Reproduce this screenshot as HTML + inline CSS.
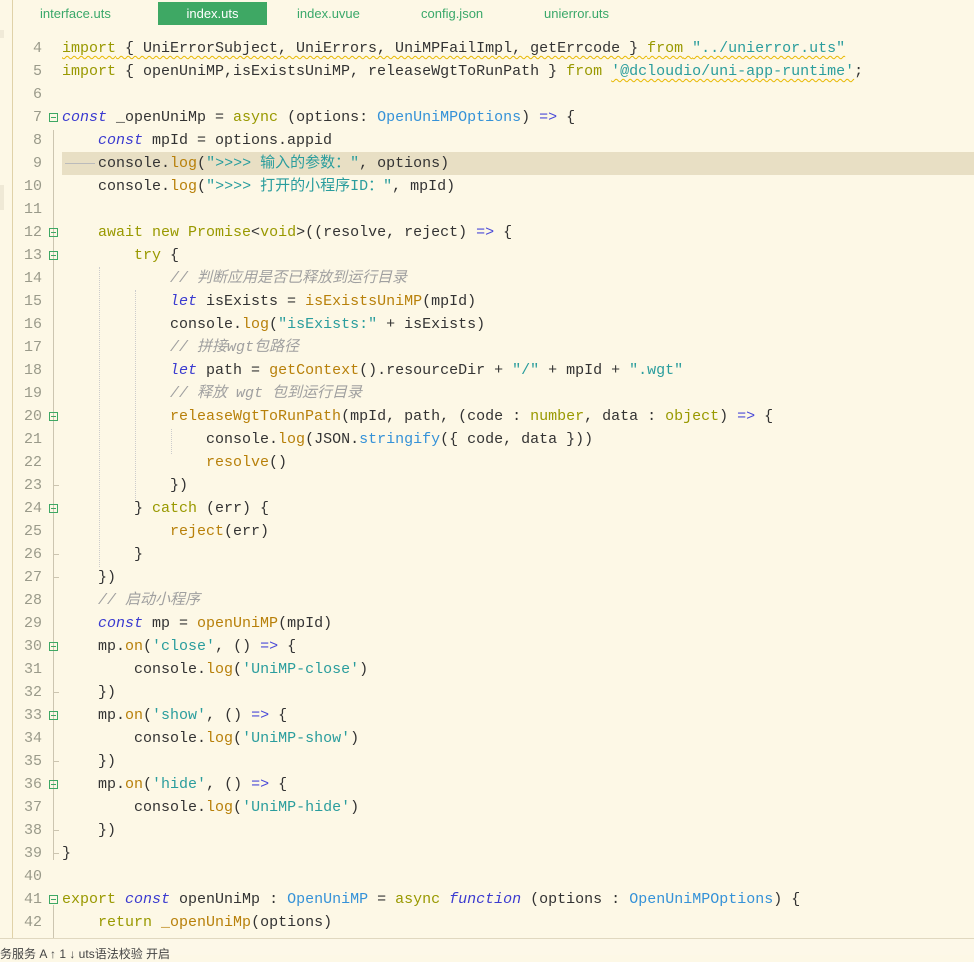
<!DOCTYPE html>
<html><head><meta charset="utf-8"><style>
body{margin:0;width:974px;height:954px;overflow:hidden;background:#fdf8e6;position:relative;font-family:"Liberation Mono","Noto Sans CJK SC",monospace;}
.tab{position:absolute;top:0;height:28px;font-family:"Liberation Sans","Noto Sans CJK SC",sans-serif;font-size:13px;line-height:28px;color:#3aa86a;}
.act{background:#3ea864;color:#fff;top:2px;height:23px;line-height:23px;text-align:center;}
.ln{position:absolute;left:14px;width:28px;text-align:right;font-size:15px;color:#9a9a8a;height:23px;line-height:23px;}
.cd{position:absolute;left:62px;font-size:15px;color:#333;white-space:pre;height:23px;line-height:23px;}
.k{color:#999900}.c{color:#3b3bd0;font-style:italic}.t{color:#3592d8}.s{color:#2a9d9d}.f{color:#b8800a}.m{color:#a0a0a0;font-style:italic}.o{color:#4a4ad8}
.w{text-decoration:underline wavy #e8b800;text-decoration-thickness:1px;text-underline-offset:3px}
.fold{position:absolute;left:49px;width:7px;height:7px;border:1px solid #3ea864;}
.fold:after{content:"";position:absolute;left:1px;right:1px;top:3px;height:1px;background:#3ea864}
.vl{position:absolute;left:53px;width:1px;background:#ccc5b0}
.tk{position:absolute;left:53px;width:6px;height:1px;background:#ccc5b0}
</style></head><body>
<div style="position:absolute;left:12px;top:0;width:1px;height:940px;background:#e0d2a8"></div>
<div style="position:absolute;left:0;top:30px;width:4px;height:8px;background:#f0ead8"></div>
<div style="position:absolute;left:0;top:185px;width:4px;height:25px;background:#efe9d6"></div>
<div class="tab" style="left:40px">interface.uts</div>
<div class="tab act" style="left:158px;width:109px">index.uts</div>
<div class="tab" style="left:297px">index.uvue</div>
<div class="tab" style="left:421px">config.json</div>
<div class="tab" style="left:544px">unierror.uts</div>
<div style="position:absolute;left:62px;top:152px;width:912px;height:23px;background:#e8dfc4"></div>
<div style="position:absolute;left:65px;top:163px;width:30px;height:1px;background:#bbb"></div>

<div class="vl" style="top:130px;height:730px"></div>
<div class="tk" style="top:485px"></div><div class="tk" style="top:554px"></div><div class="tk" style="top:577px"></div><div class="tk" style="top:692px"></div><div class="tk" style="top:761px"></div><div class="tk" style="top:830px"></div><div class="tk" style="top:853px"></div>
<div class="vl" style="top:905px;height:33px"></div>
<div style="position:absolute;left:99px;top:267px;height:300px;border-left:1px dotted #ccc"></div>
<div style="position:absolute;left:135px;top:290px;height:210px;border-left:1px dotted #ccc"></div>
<div style="position:absolute;left:171px;top:429px;height:25px;border-left:1px dotted #ccc"></div>

<div class="fold" style="top:113px"></div><div class="fold" style="top:228px"></div><div class="fold" style="top:251px"></div><div class="fold" style="top:412px"></div><div class="fold" style="top:504px"></div><div class="fold" style="top:642px"></div><div class="fold" style="top:711px"></div><div class="fold" style="top:780px"></div><div class="fold" style="top:895px"></div>

<div class="ln" style="top:37px">4</div><div class="cd" style="top:37px"><span class="w"><span class="k">import</span> { UniErrorSubject, UniErrors, UniMPFailImpl, getErrcode } <span class="k">from</span> <span class="s">"../unierror.uts"</span></span></div>
<div class="ln" style="top:60px">5</div><div class="cd" style="top:60px"><span class="k">import</span> { openUniMP,isExistsUniMP, releaseWgtToRunPath } <span class="k">from</span> <span class="s w">'@dcloudio/uni-app-runtime'</span>;</div>
<div class="ln" style="top:83px">6</div>
<div class="ln" style="top:106px">7</div><div class="cd" style="top:106px"><span class="c">const</span> _openUniMp = <span class="k">async</span> (options: <span class="t">OpenUniMPOptions</span>) <span class="o">=&gt;</span> {</div>
<div class="ln" style="top:129px">8</div><div class="cd" style="top:129px">    <span class="c">const</span> mpId = options.appid</div>
<div class="ln" style="top:152px">9</div><div class="cd" style="top:152px">    console.<span class="f">log</span>(<span class="s">"&gt;&gt;&gt;&gt; 输入的参数："</span>, options)</div>
<div class="ln" style="top:175px">10</div><div class="cd" style="top:175px">    console.<span class="f">log</span>(<span class="s">"&gt;&gt;&gt;&gt; 打开的小程序ID："</span>, mpId)</div>
<div class="ln" style="top:198px">11</div>
<div class="ln" style="top:221px">12</div><div class="cd" style="top:221px">    <span class="k">await new Promise</span>&lt;<span class="k">void</span>&gt;((resolve, reject) <span class="o">=&gt;</span> {</div>
<div class="ln" style="top:244px">13</div><div class="cd" style="top:244px">        <span class="k">try</span> {</div>
<div class="ln" style="top:267px">14</div><div class="cd" style="top:267px">            <span class="m">// 判断应用是否已释放到运行目录</span></div>
<div class="ln" style="top:290px">15</div><div class="cd" style="top:290px">            <span class="c">let</span> isExists = <span class="f">isExistsUniMP</span>(mpId)</div>
<div class="ln" style="top:313px">16</div><div class="cd" style="top:313px">            console.<span class="f">log</span>(<span class="s">"isExists:"</span> + isExists)</div>
<div class="ln" style="top:336px">17</div><div class="cd" style="top:336px">            <span class="m">// 拼接wgt包路径</span></div>
<div class="ln" style="top:359px">18</div><div class="cd" style="top:359px">            <span class="c">let</span> path = <span class="f">getContext</span>().resourceDir + <span class="s">"/"</span> + mpId + <span class="s">".wgt"</span></div>
<div class="ln" style="top:382px">19</div><div class="cd" style="top:382px">            <span class="m">// 释放 wgt 包到运行目录</span></div>
<div class="ln" style="top:405px">20</div><div class="cd" style="top:405px">            <span class="f">releaseWgtToRunPath</span>(mpId, path, (code : <span class="k">number</span>, data : <span class="k">object</span>) <span class="o">=&gt;</span> {</div>
<div class="ln" style="top:428px">21</div><div class="cd" style="top:428px">                console.<span class="f">log</span>(JSON.<span class="t">stringify</span>({ code, data }))</div>
<div class="ln" style="top:451px">22</div><div class="cd" style="top:451px">                <span class="f">resolve</span>()</div>
<div class="ln" style="top:474px">23</div><div class="cd" style="top:474px">            })</div>
<div class="ln" style="top:497px">24</div><div class="cd" style="top:497px">        } <span class="k">catch</span> (err) {</div>
<div class="ln" style="top:520px">25</div><div class="cd" style="top:520px">            <span class="f">reject</span>(err)</div>
<div class="ln" style="top:543px">26</div><div class="cd" style="top:543px">        }</div>
<div class="ln" style="top:566px">27</div><div class="cd" style="top:566px">    })</div>
<div class="ln" style="top:589px">28</div><div class="cd" style="top:589px">    <span class="m">// 启动小程序</span></div>
<div class="ln" style="top:612px">29</div><div class="cd" style="top:612px">    <span class="c">const</span> mp = <span class="f">openUniMP</span>(mpId)</div>
<div class="ln" style="top:635px">30</div><div class="cd" style="top:635px">    mp.<span class="f">on</span>(<span class="s">'close'</span>, () <span class="o">=&gt;</span> {</div>
<div class="ln" style="top:658px">31</div><div class="cd" style="top:658px">        console.<span class="f">log</span>(<span class="s">'UniMP-close'</span>)</div>
<div class="ln" style="top:681px">32</div><div class="cd" style="top:681px">    })</div>
<div class="ln" style="top:704px">33</div><div class="cd" style="top:704px">    mp.<span class="f">on</span>(<span class="s">'show'</span>, () <span class="o">=&gt;</span> {</div>
<div class="ln" style="top:727px">34</div><div class="cd" style="top:727px">        console.<span class="f">log</span>(<span class="s">'UniMP-show'</span>)</div>
<div class="ln" style="top:750px">35</div><div class="cd" style="top:750px">    })</div>
<div class="ln" style="top:773px">36</div><div class="cd" style="top:773px">    mp.<span class="f">on</span>(<span class="s">'hide'</span>, () <span class="o">=&gt;</span> {</div>
<div class="ln" style="top:796px">37</div><div class="cd" style="top:796px">        console.<span class="f">log</span>(<span class="s">'UniMP-hide'</span>)</div>
<div class="ln" style="top:819px">38</div><div class="cd" style="top:819px">    })</div>
<div class="ln" style="top:842px">39</div><div class="cd" style="top:842px">}</div>
<div class="ln" style="top:865px">40</div>
<div class="ln" style="top:888px">41</div><div class="cd" style="top:888px"><span class="k">export</span> <span class="c">const</span> openUniMp : <span class="t">OpenUniMP</span> = <span class="k">async</span> <span class="c">function</span> (options : <span class="t">OpenUniMPOptions</span>) {</div>
<div class="ln" style="top:911px">42</div><div class="cd" style="top:911px">    <span class="k">return</span> <span class="f">_openUniMp</span>(options)</div>

<div style="position:absolute;left:0;top:938px;width:974px;height:16px;background:#fdf8e8;border-top:1px solid #e0d8c0"></div>
<div style="position:absolute;left:0;top:945px;font:12px 'Liberation Sans','Noto Sans CJK SC',sans-serif;color:#444;white-space:nowrap">务服务 A ↑ 1 ↓ uts语法校验 开启</div>
</body></html>
